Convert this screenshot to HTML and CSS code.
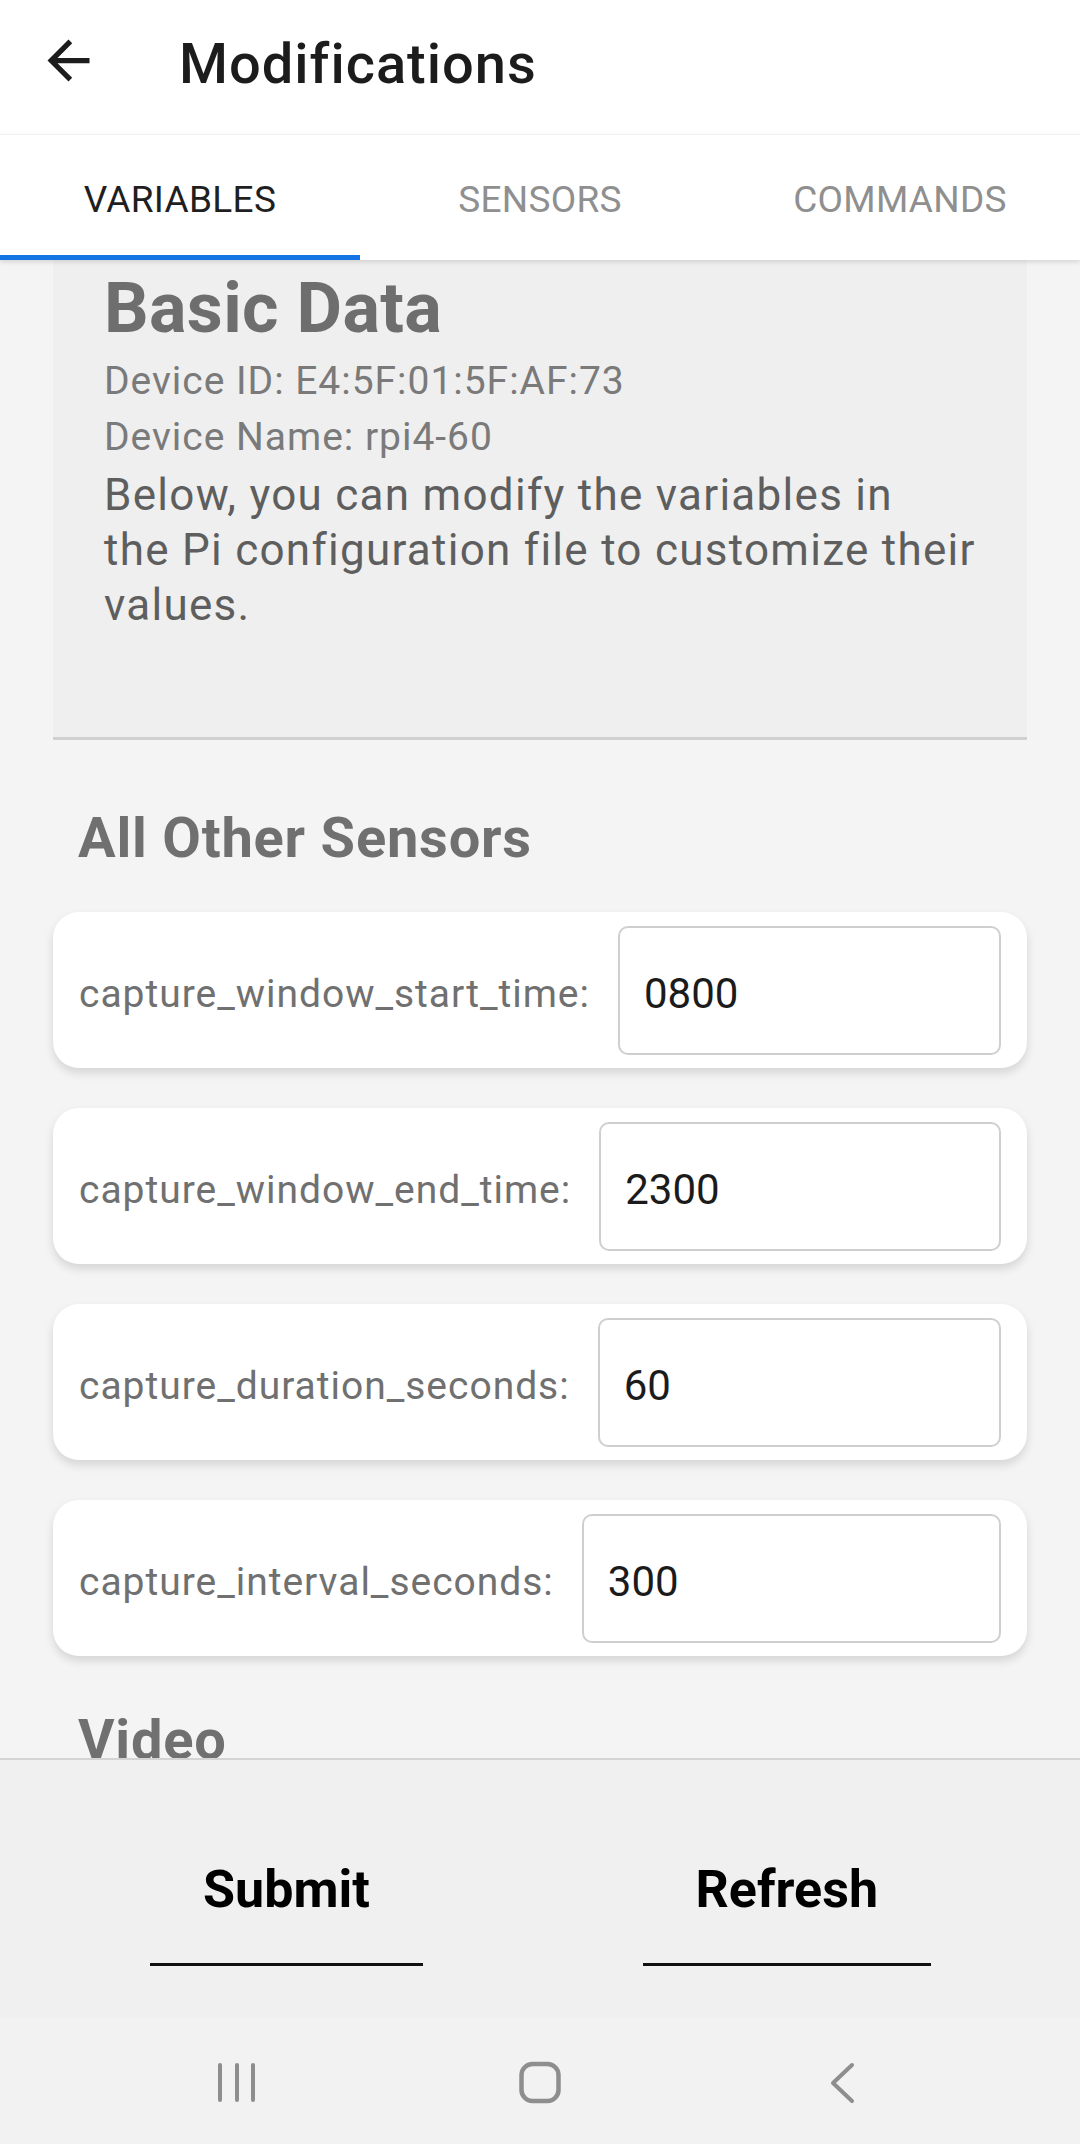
FILE: index.html
```html
<!DOCTYPE html>
<html lang="en">
<head>
<meta charset="utf-8">
<title>Modifications</title>
<link rel="stylesheet" href="styles.css">
</head>
<body>
<div class="screen">
  <header class="appbar">
    <svg class="back-icon" viewBox="0 0 24 24" aria-hidden="true"><path d="M20 11H7.83l5.59-5.59L12 4l-8 8 8 8 1.41-1.41L7.83 13H20v-2z"/></svg>
    <h1 class="appbar-title">Modifications</h1>
  </header>

  <nav class="tabs">
    <div class="tab tab-active">VARIABLES</div>
    <div class="tab">SENSORS</div>
    <div class="tab">COMMANDS</div>
  </nav>

  <main class="content">
    <section class="basic-card">
      <h2 class="basic-title">Basic Data</h2>
      <p class="meta meta-first">Device ID: E4:5F:01:5F:AF:73</p>
      <p class="meta">Device Name: rpi4-60</p>
      <p class="desc">Below, you can modify the variables in<br>the Pi configuration file to customize their values.</p>
    </section>

    <h3 class="section-title">All Other Sensors</h3>

    <div class="field-list">
      <div class="field-card">
        <span class="field-label">capture_window_start_time:</span>
        <input class="field-input" type="text" value="0800">
      </div>
      <div class="field-card">
        <span class="field-label">capture_window_end_time:</span>
        <input class="field-input" type="text" value="2300">
      </div>
      <div class="field-card">
        <span class="field-label">capture_duration_seconds:</span>
        <input class="field-input" type="text" value="60">
      </div>
      <div class="field-card">
        <span class="field-label">capture_interval_seconds:</span>
        <input class="field-input" type="text" value="300">
      </div>
    </div>

    <h3 class="section-title section-video">Video</h3>
  </main>

  <footer class="actions">
    <button class="action-btn" type="button">Submit</button>
    <button class="action-btn" type="button">Refresh</button>
  </footer>

  <div class="navbar">
    <svg class="nav-icon" viewBox="0 0 60 60" aria-hidden="true">
      <g stroke="#8e8e8e" stroke-width="4" stroke-linecap="round" fill="none">
        <line x1="13" y1="12" x2="13" y2="47"/>
        <line x1="30" y1="12" x2="30" y2="47"/>
        <line x1="46" y1="12" x2="46" y2="47"/>
      </g>
    </svg>
    <svg class="nav-icon" viewBox="0 0 60 60" aria-hidden="true">
      <rect x="11.5" y="11" width="37" height="37" rx="11" ry="11" fill="none" stroke="#8e8e8e" stroke-width="4.5"/>
    </svg>
    <svg class="nav-icon" viewBox="0 0 60 60" aria-hidden="true">
      <polyline points="39,12 20,30 39,48" fill="none" stroke="#8e8e8e" stroke-width="4" stroke-linecap="round" stroke-linejoin="round"/>
    </svg>
  </div>
</div>
</body>
</html>
```

FILE: styles.css
```css
* {
  box-sizing: border-box;
}

html, body {
  margin: 0;
  padding: 0;
}

body {
  font-family: Roboto, "Noto Sans", "Liberation Sans", sans-serif;
  background: #f4f4f4;
}

.screen {
  width: 1080px;
  height: 2144px;
  display: flex;
  flex-direction: column;
  overflow: hidden;
  background: #f4f4f4;
}

/* App bar */
.appbar {
  height: 134px;
  flex: none;
  background: #ffffff;
  display: flex;
  align-items: flex-start;
  padding-left: 37px;
}

.back-icon {
  width: 63px;
  height: 63px;
  margin-top: 29px;
  fill: #1c1c1c;
  flex: none;
}

.appbar-title {
  margin: 31px 0 0 79px;
  font-size: 56px;
  line-height: 66px;
  font-weight: 500;
  letter-spacing: 0.018em;
  color: #1c1c1c;
}

/* Tabs */
.tabs {
  position: relative;
  z-index: 2;
  height: 126px;
  flex: none;
  display: flex;
  background: #ffffff;
  border-top: 1px solid #f3f3f3;
  box-shadow: 0 2px 5px rgba(0, 0, 0, 0.13);
}

.tab {
  flex: 1;
  height: 125px;
  padding-top: 43px;
  text-align: center;
  font-size: 37px;
  line-height: 44px;
  letter-spacing: 0.008em;
  color: #8f8f8f;
  border-bottom: 5px solid transparent;
}

.tab-active {
  color: #1f1f1f;
  border-bottom-color: #1474e4;
}

/* Scroll content */
.content {
  flex: 1;
  min-height: 0;
  overflow: hidden;
}

.basic-card {
  margin: 0 53px;
  padding: 6px 16px 104px 51px;
  background: #efefef;
  border-bottom: 3px solid #d0d0d0;
}

.basic-title {
  margin: 0;
  font-size: 70px;
  line-height: 84px;
  font-weight: 700;
  letter-spacing: 0.005em;
  color: #6e6e6e;
}

.meta {
  margin: 0;
  font-size: 39px;
  line-height: 56px;
  letter-spacing: 0.025em;
  color: #7a7a7a;
}

.meta-first {
  margin-top: 3px;
}

.desc {
  margin: 3px 0 0;
  font-size: 44px;
  line-height: 55px;
  letter-spacing: 0.029em;
  color: #5e5e5e;
}

.section-title {
  margin: 64px 0 40px 78px;
  font-size: 56px;
  line-height: 68px;
  font-weight: 700;
  letter-spacing: 0.014em;
  color: #707070;
}

.section-video {
  margin-top: 50px;
}

.field-list {
  display: flex;
  flex-direction: column;
  gap: 40px;
  margin: 0 53px;
}

.field-card {
  height: 156px;
  display: flex;
  align-items: center;
  padding: 0 26px;
  background: #ffffff;
  border-radius: 26px;
  box-shadow: 0 5px 10px rgba(0, 0, 0, 0.13);
}

.field-label {
  flex: none;
  white-space: nowrap;
  padding-top: 7px;
  font-size: 39px;
  letter-spacing: 0.025em;
  color: #707070;
}

.field-input {
  flex: 1;
  min-width: 0;
  height: 129px;
  margin-left: 28px;
  padding: 7px 24px 0;
  border: 2px solid #cfcfcf;
  border-radius: 10px;
  background: #ffffff;
  font-family: Roboto, "Noto Sans", "Liberation Sans", sans-serif;
  font-size: 42px;
  color: #1b1b1b;
  outline: none;
}

/* Bottom actions */
.actions {
  height: 259px;
  flex: none;
  display: flex;
  justify-content: space-between;
  align-items: flex-start;
  padding: 98px 149px 0 150px;
  background: #f0f0f0;
  border-top: 2px solid #d4d4d4;
}

.action-btn {
  padding: 0 53px 41px;
  margin: 0;
  background: none;
  border: none;
  border-bottom: 3px solid #111111;
  border-radius: 0;
  font-family: Roboto, "Noto Sans", "Liberation Sans", sans-serif;
  font-size: 52px;
  line-height: 64px;
  font-weight: 700;
  color: #000000;
}

/* System navigation bar */
.navbar {
  height: 127px;
  flex: none;
  display: flex;
  justify-content: space-between;
  align-items: flex-start;
  padding: 36px 207px 0;
  background: #f2f2f2;
}

.nav-icon {
  width: 60px;
  height: 60px;
}
```
